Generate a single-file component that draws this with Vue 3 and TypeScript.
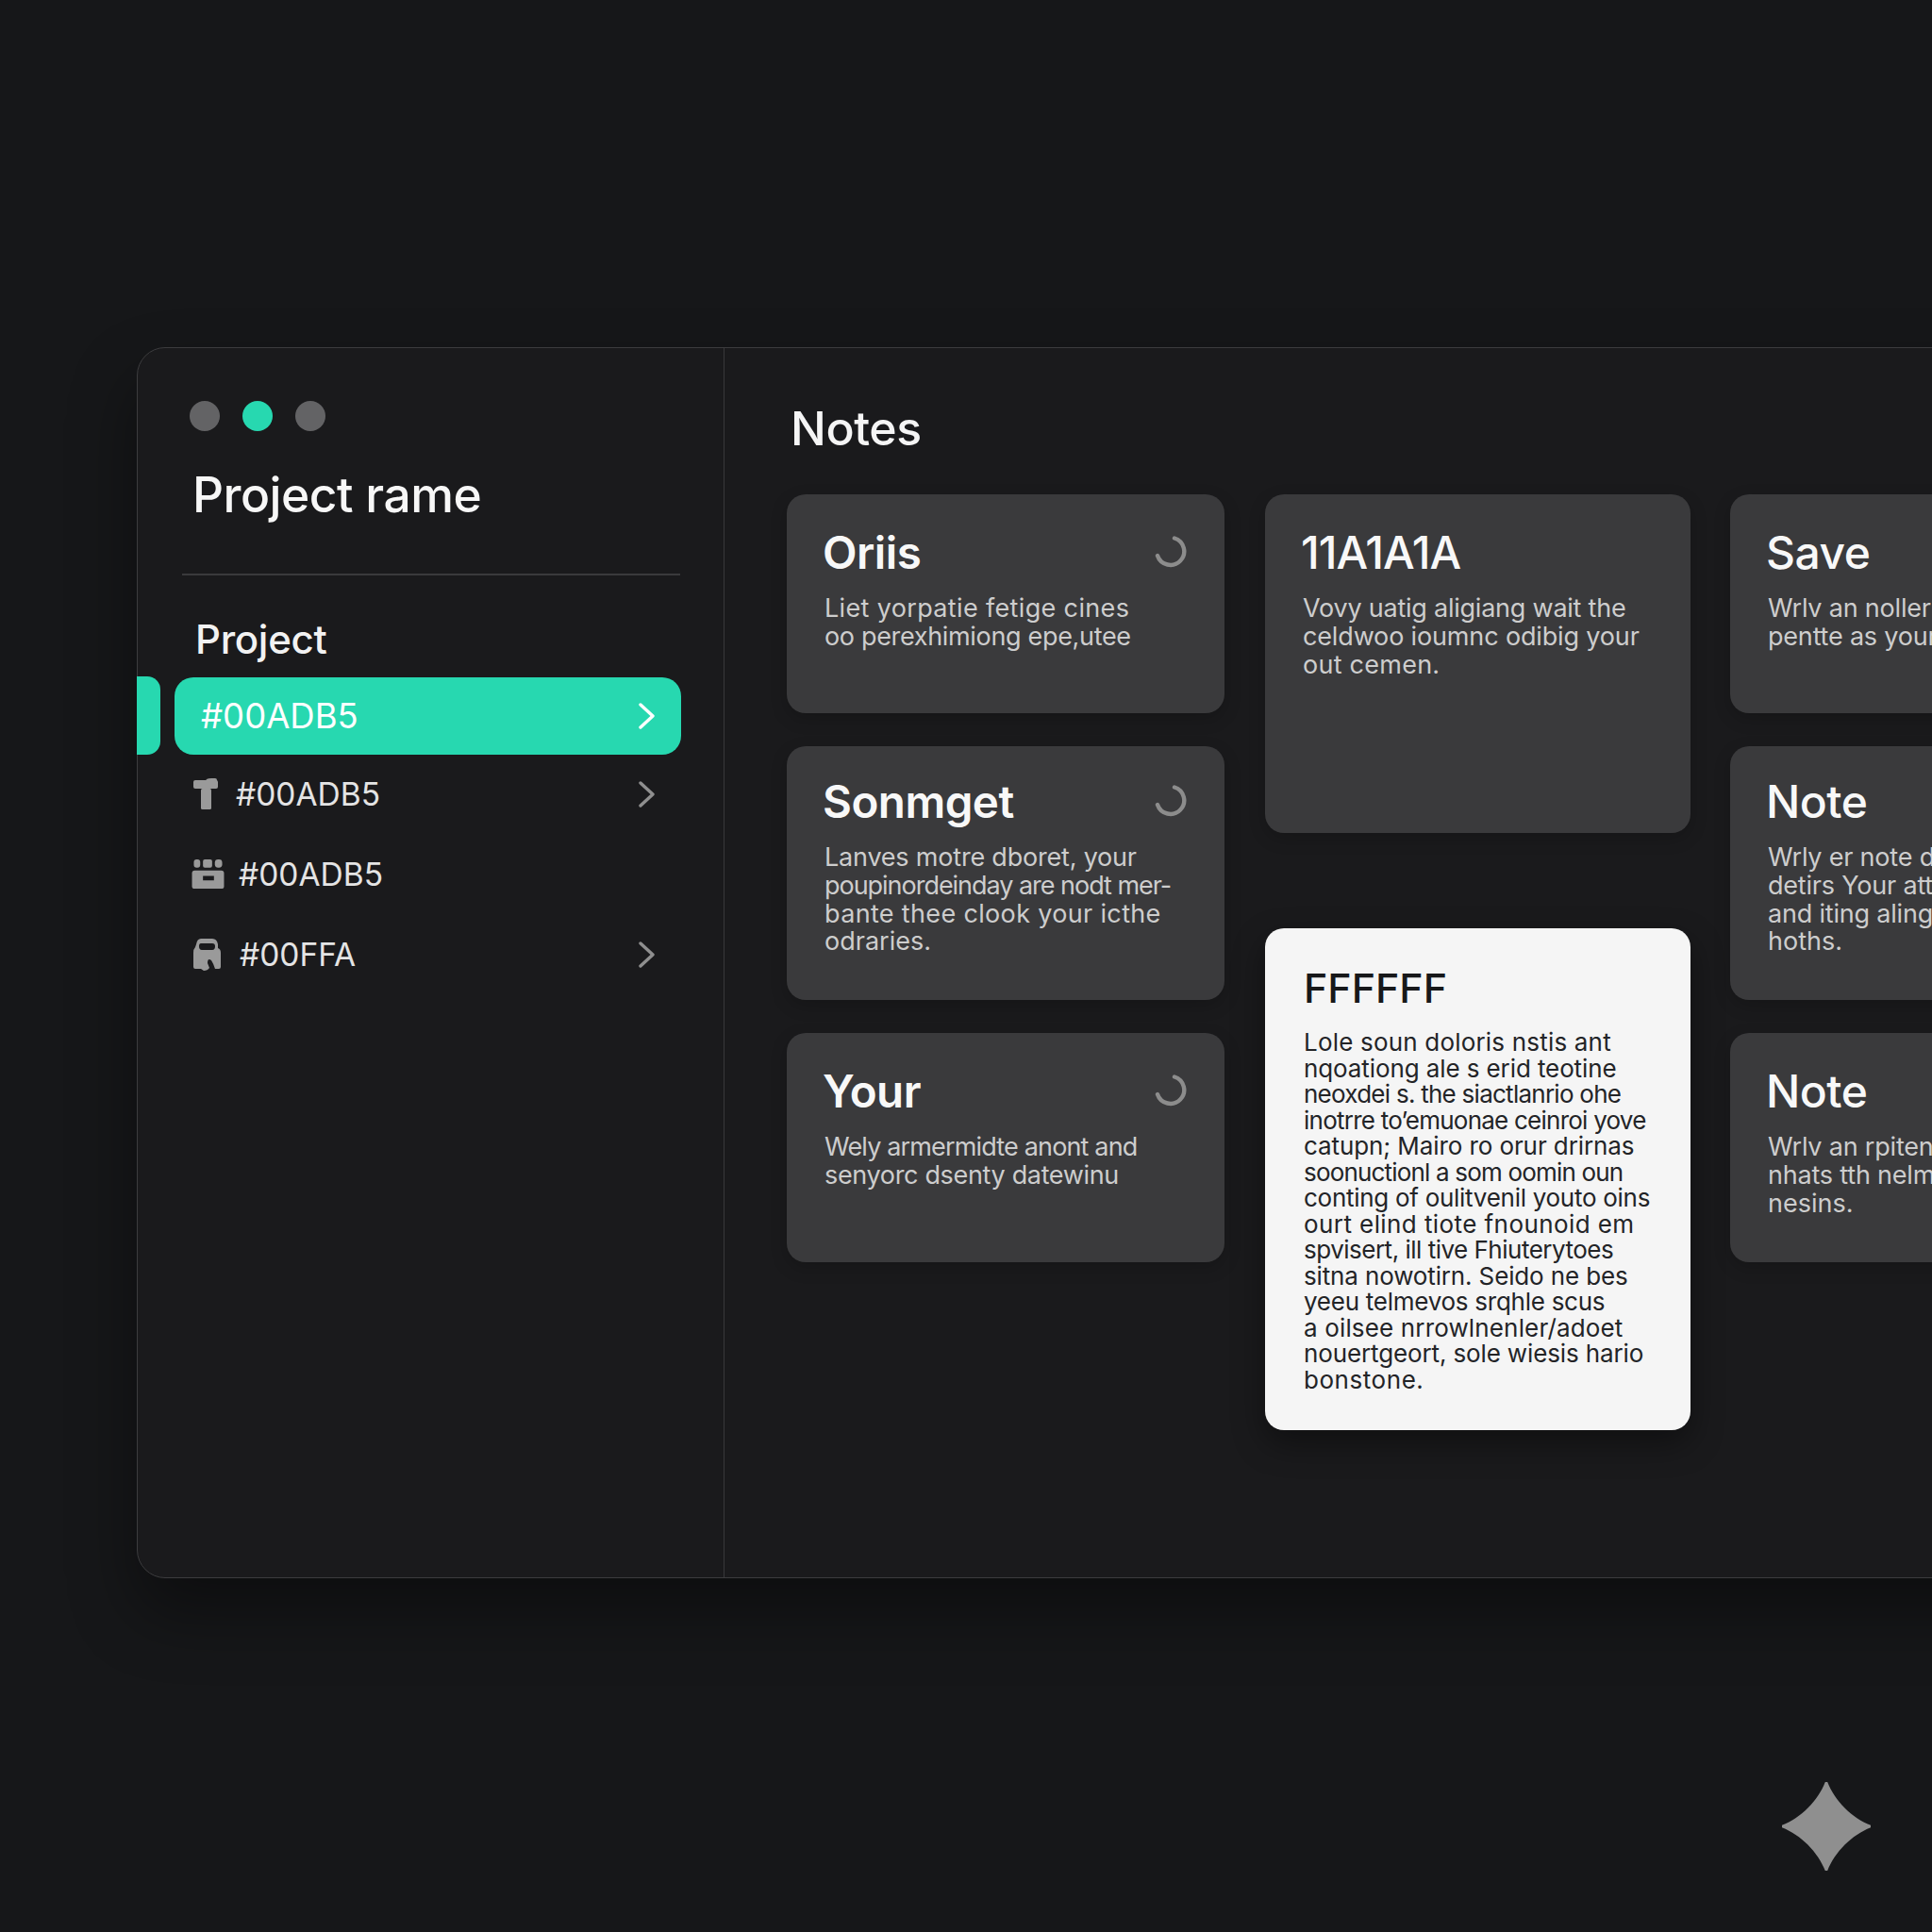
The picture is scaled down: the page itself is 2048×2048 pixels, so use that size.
<script setup lang="ts">
interface Line { t: string; ls: number }
interface Note { title: string; lines: Line[]; spinner?: boolean; cls: string }

const L = (t: string, ls = 0): Line => ({ t, ls })

const colA: Note[] = [
  { title: 'Oriis', cls: 'h232', lines: [L('Liet yorpatie fetige cines', 0.35), L('oo perexhimiong epe,utee', -0.33)] },
  { title: 'Sonmget', cls: 'h269', lines: [L('Lanves motre dboret, your', -0.2), L('poupinordeinday are nodt mer-', -1.03), L('bante thee clook your icthe', 0.34), L('odraries.')] },
  { title: 'Your', cls: 'h243', lines: [L('Wely armermidte anont and', -0.84), L('senyorc dsenty datewinu', -0.34)] },
]
const colC: Note[] = [
  { title: 'Save', cls: 'h232', lines: [L('Wrlv an nollern', -0.2), L('pentte as your', -0.2)] },
  { title: 'Note', cls: 'h269', lines: [L('Wrly er note dir', -0.2), L('detirs Your att', -0.2), L('and iting aling', -0.2), L('hoths.')] },
  { title: 'Note', cls: 'h243', lines: [L('Wrlv an rpiten', -0.2), L('nhats tth nelmo', -0.2), L('nesins.')] },
]
const tall: Line[] = [L('Vovy uatig aligiang wait the', -0.23), L('celdwoo ioumnc odibig your', -0.15), L('out cemen.', 0.25)]
const white: Line[] = [
  L('Lole soun doloris nstis ant', 0.19),
  L('nqoationg ale s erid teotine', -0.1),
  L('neoxdei s. the siactlanrio ohe', -0.74),
  L('inotrre to\u2019emuonae ceinroi yove', -0.76),
  L('catupn; Mairo ro orur drirnas', -0.09),
  L('soonuctionl a som oomin oun', -0.82),
  L('conting of oulitvenil youto oins', -0.28),
  L('ourt elind tiote fnounoid em', 0.42),
  L('spvisert, ill tive Fhiuterytoes', -0.5),
  L('sitna nowotirn. Seido ne bes', -0.14),
  L('yeeu telmevos srqhle scus', -0.26),
  L('a oilsee nrrowlnenler/adoet', 0.15),
  L('nouertgeort, sole wiesis hario', -0.13),
  L('bonstone.', 0.55),
]
const track = (l: Line) => ({ letterSpacing: `${l.ls}px` })
</script>

<template>
  <div class="page">
    <div class="window">
      <aside class="sidebar">
        <div class="dots">
          <span class="dot"></span>
          <span class="dot on"></span>
          <span class="dot"></span>
        </div>
        <h1 class="project-name">Project rame</h1>
        <div class="rule"></div>
        <h2 class="section">Project</h2>
        <div class="active-wrap">
          <span class="marker"></span>
          <div class="active">
            <span>#00ADB5</span>
            <svg class="chev" viewBox="0 0 18 28"><path d="M2 2 L15 14 L2 26" /></svg>
          </div>
        </div>
        <div class="row r1">
          <svg class="ico i1" viewBox="0 0 26 33">
            <path d="M13 3 Q13 0 19 0 L23 0 Q25 0 25 2 L25 3 Z" />
            <rect x="0" y="2" width="26" height="9" rx="2" />
            <rect x="8" y="11" width="11" height="22" rx="1.5" />
          </svg>
          <span class="label">#00ADB5</span>
          <svg class="chev dim" viewBox="0 0 18 28"><path d="M2 2 L15 14 L2 26" /></svg>
        </div>
        <div class="row r2">
          <svg class="ico i2" viewBox="0 0 35 33">
            <rect x="2" y="0" width="7" height="9" rx="3" />
            <rect x="12" y="0" width="10" height="9" rx="2" />
            <rect x="25" y="0" width="8" height="9" rx="3.5" />
            <path fill-rule="evenodd" d="M3 12 H32 Q35 12 35 15 V30 Q35 32 33 32 H2 Q0 32 0 30 V15 Q0 12 3 12 Z M12 18 V23 H24 V18 Z" />
          </svg>
          <span class="label">#00ADB5</span>
        </div>
        <div class="row r3">
          <svg class="ico i3" viewBox="0 0 29 34">
            <path fill-rule="evenodd" d="M8 0 H20 Q25 0 26 6 L26 10 Q29 11 29 15 V30 Q29 32 27 32 L23 32 Q21 26 19 23 Q15 20 15 26 L17 31 Q15 34 11 34 L8 32 H2 Q0 32 0 30 V15 Q0 11 2 9 L3 6 Q4 0 8 0 Z M8 5 Q6 5 6 8 Q6 12 9 12 H20 Q23 12 23 8 Q23 5 20 5 Z" />
          </svg>
          <span class="label">#00FFA</span>
          <svg class="chev dim" viewBox="0 0 18 28"><path d="M2 2 L15 14 L2 26" /></svg>
        </div>
      </aside>

      <main class="main">
        <h2 class="notes">Notes</h2>
        <div class="board">
          <div class="col col-a">
            <article v-for="n in colA" :key="n.title" class="card" :class="n.cls">
              <header class="head">
                <h3 class="title">{{ n.title }}</h3>
                <svg class="spin" viewBox="0 0 34 34"><path d="M21 2.5 A14.5 14.5 0 1 1 3 21" /></svg>
              </header>
              <p v-for="l in n.lines" :key="l.t" class="line" :style="track(l)">{{ l.t }}</p>
            </article>
          </div>
          <div class="col col-b">
            <article class="card h359">
              <header class="head"><h3 class="title thin">11A1A1A</h3></header>
              <p v-for="l in tall" :key="l.t" class="line" :style="track(l)">{{ l.t }}</p>
            </article>
            <article class="card paper">
              <h3 class="paper-title">FFFFFF</h3>
              <p v-for="l in white" :key="l.t" class="paper-line" :style="track(l)">{{ l.t }}</p>
            </article>
          </div>
          <div class="col col-c">
            <article v-for="(n, i) in colC" :key="i" class="card" :class="n.cls">
              <header class="head"><h3 class="title medium">{{ n.title }}</h3></header>
              <p v-for="l in n.lines" :key="l.t" class="line" :style="track(l)">{{ l.t }}</p>
            </article>
          </div>
        </div>
      </main>
    </div>

    <svg class="star" viewBox="0 0 96 96">
      <path d="M46.8 1 H49.2 C57 21 75 39 95 46.8 V49.2 C75 57 57 75 49.2 95 H46.8 C39 75 21 57 1 49.2 V46.8 C21 39 39 21 46.8 1 Z" />
    </svg>
  </div>
</template>

<style>
html, body { margin: 0; background: #161719; }
</style>

<style scoped>
.page {
  position: relative;
  width: 2048px;
  height: 2048px;
  overflow: hidden;
  background: #161719;
  font-family: Inter, "Liberation Sans", sans-serif;
  padding: 368px 0 0 145px;
  box-sizing: border-box;
}
h1, h2, h3, p { margin: 0; font-weight: 400; }

.window {
  display: flex;
  width: 2100px;
  height: 1305px;
  box-sizing: border-box;
  background: #1a1a1c;
  border: 1.5px solid #3c3c3e;
  border-radius: 30px;
  box-shadow: 0 36px 70px rgba(0, 0, 0, 0.4);
}

.sidebar {
  width: 622px;
  flex: none;
  box-sizing: border-box;
  border-right: 1.5px solid #38383a;
  display: flex;
  flex-direction: column;
}
.dots { display: flex; gap: 24px; margin: 56px 0 0 55px; }
.dot { width: 32px; height: 32px; border-radius: 50%; background: #636365; }
.dot.on { background: #27d8b0; }
.project-name {
  margin: 36px 0 0 58px;
  font-size: 51.5px;
  line-height: 62px;
  font-weight: 500;
  letter-spacing: -0.5px;
  color: #f7f7f7;
}
.rule { height: 1.5px; background: #3a3a3c; margin: 53px 46px 0 47px; }
.section {
  margin: 43px 0 0 61px;
  font-size: 42px;
  line-height: 50px;
  font-weight: 500;
  letter-spacing: -0.3px;
  color: #f2f2f2;
}
.active-wrap { position: relative; margin: 15px 45px 0 39px; }
.marker {
  position: absolute;
  left: -40px;
  top: -1px;
  width: 25px;
  height: 83px;
  border-radius: 0 14px 14px 0;
  background: #27d8b0;
}
.active {
  height: 82px;
  box-sizing: border-box;
  padding: 0 27px 0 28px;
  border-radius: 20px;
  background: #27d8b0;
  display: flex;
  align-items: center;
  justify-content: space-between;
  font-size: 36.5px;
  color: #fff;
}
.chev { width: 18px; height: 28px; flex: none; }
.chev path { fill: none; stroke: #fff; stroke-width: 3.4; stroke-linecap: round; stroke-linejoin: round; }
.chev.dim path { stroke: #8f8f8f; }

.row {
  height: 84px;
  display: flex;
  align-items: center;
  font-size: 33.5px;
  color: #e4e4e4;
  margin-right: 72px;
}
.row .chev { margin-left: auto; }
.ico { flex: none; fill: #9a9a9a; }
.r1 { margin-left: 59px; gap: 19px; }
.i1 { width: 26px; height: 33px; }
.r2 { margin-left: 57px; gap: 15px; margin-top: 1px; }
.i2 { width: 35px; height: 32px; }
.r3 { margin-left: 59px; gap: 20px; margin-top: 1px; }
.i3 { width: 29px; height: 34px; }

.main { flex: 1; min-width: 0; padding-left: 66px; }
.notes {
  margin: 54px 0 0 4px;
  font-size: 50px;
  line-height: 62px;
  font-weight: 500;
  letter-spacing: -0.4px;
  color: #f5f5f5;
}
.board { display: flex; margin-top: 39px; align-items: flex-start; }
.col { display: flex; flex-direction: column; flex: none; }
.col-a { width: 464px; gap: 35px; margin-right: 43px; }
.col-b { width: 451px; gap: 101px; margin-right: 42px; }
.col-c { width: 451px; gap: 35px; }

.card {
  box-sizing: border-box;
  border-radius: 20px;
  background: #3a3a3c;
  padding: 34px 41px 0 38px;
  box-shadow: 0 6px 18px rgba(0, 0, 0, 0.18);
}
.h232 { height: 232px; }
.h269 { height: 269px; padding-top: 31px; }
.h243 { height: 243px; }
.h359 { height: 359px; }
.head { display: flex; justify-content: space-between; align-items: center; height: 56px; margin-bottom: 16px; }
.title { font-size: 47.5px; line-height: 56px; font-weight: 600; letter-spacing: -0.5px; color: #f8f8f8; }
.title.thin { font-weight: 500; letter-spacing: -1px; }
.title.medium { font-weight: 500; font-size: 48px; }
.spin { width: 34px; height: 34px; flex: none; margin: -2px -1px 0 0; }
.spin path { fill: none; stroke: #8c8c8c; stroke-width: 4.4; stroke-linecap: round; }
.line { font-size: 27px; line-height: 29.8px; color: #cdcdcd; white-space: nowrap; padding-left: 2px; }

.paper {
  height: 532px;
  background: #f5f5f5;
  padding: 37px 0 0 41px;
  box-shadow: 0 14px 34px rgba(0, 0, 0, 0.4);
}
.paper-title { font-size: 43px; line-height: 52px; font-weight: 500; color: #17181a; margin-bottom: 18px; }
.paper-line { font-size: 26px; line-height: 27.5px; color: #232427; white-space: nowrap; }

.star { position: absolute; left: 1888px; top: 1888px; width: 96px; height: 96px; fill: #8f8f8f; }
</style>
